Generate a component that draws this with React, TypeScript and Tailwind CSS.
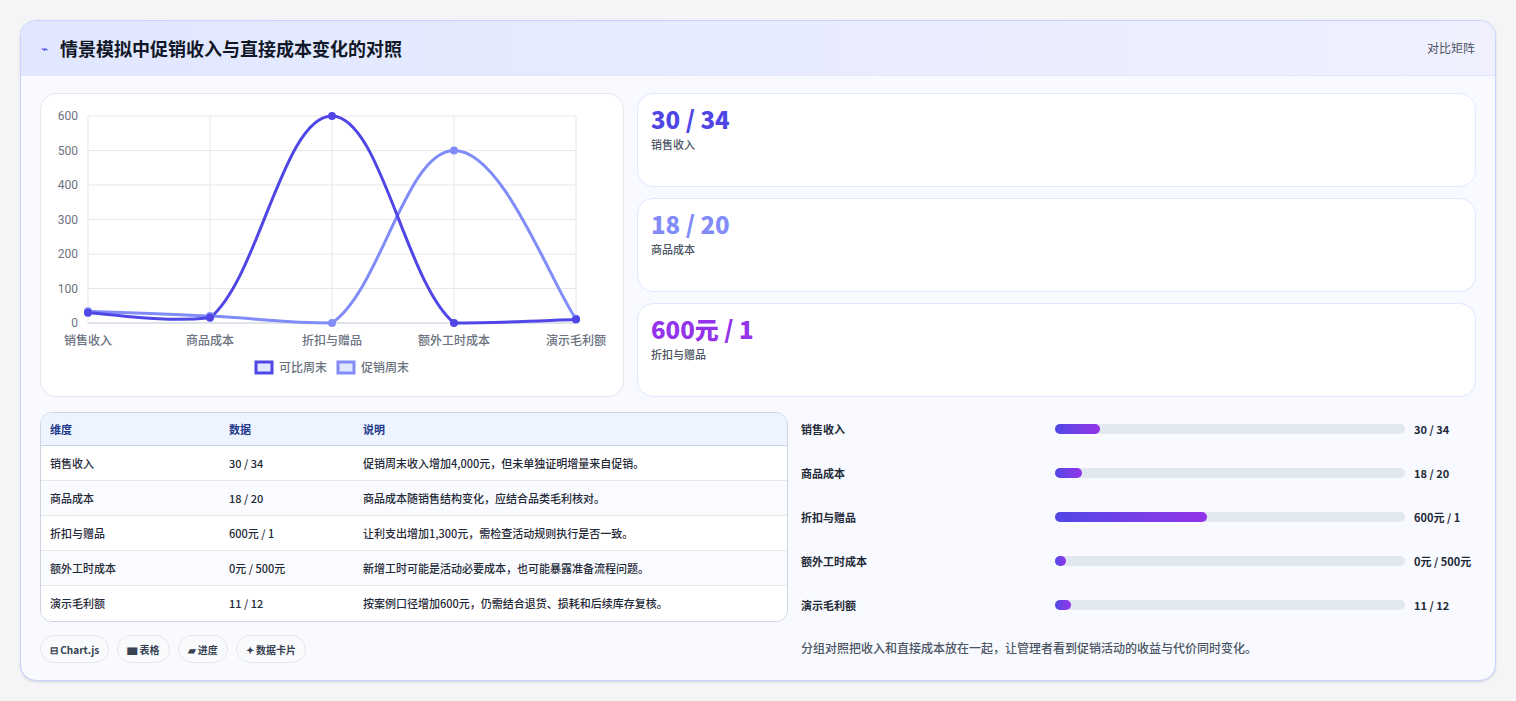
import React from "react";

const labels = ["销售收入", "商品成本", "折扣与赠品", "额外工时成本", "演示毛利额"];
const s1 = [30, 15, 600, 0, 10];
const s2 = [34, 20, 0, 500, 12];
const X0 = 47, X1 = 535, Y0 = 229, Y1 = 22;
const px = (i: number) => X0 + ((X1 - X0) / 4) * i;
const py = (v: number) => Y0 - ((Y0 - Y1) * v) / 600;
const cl = (y: number) => Math.min(Y0, Math.max(Y1, y));

function path(data: number[]) {
  const pts = data.map((v, i) => [px(i), py(v)]);
  const t = 0.4;
  let d = `M${pts[0][0]},${pts[0][1]}`;
  for (let i = 0; i < pts.length - 1; i++) {
    const p0 = pts[Math.max(0, i - 1)], p1 = pts[i], p2 = pts[i + 1], p3 = pts[Math.min(pts.length - 1, i + 2)];
    const c1 = [p1[0] + ((p2[0] - p0[0]) * t) / 2, cl(p1[1] + ((p2[1] - p0[1]) * t) / 2)];
    const c2 = [p2[0] - ((p3[0] - p1[0]) * t) / 2, cl(p2[1] - ((p3[1] - p1[1]) * t) / 2)];
    d += ` C${c1[0]},${c1[1]} ${c2[0]},${c2[1]} ${p2[0]},${p2[1]}`;
  }
  return d;
}

function Chart() {
  return (
    <svg width="583" height="303" viewBox="0 0 583 303" className="block">
      {[0, 100, 200, 300, 400, 500, 600].map((v) => (
        <g key={v}>
          <line x1={X0} x2={X1} y1={py(v)} y2={py(v)} stroke="#e5e7eb" />
          <text x={X0 - 10} y={py(v) + 4} textAnchor="end" fontSize="12" fill="#6b7280" fontFamily="Roboto, sans-serif">{v}</text>
        </g>
      ))}
      {labels.map((l, i) => (
        <g key={l}>
          <line x1={px(i)} x2={px(i)} y1={Y1} y2={Y0} stroke="#e5e7eb" />
          <text x={px(i)} y={251} textAnchor="middle" fontSize="12" fontWeight="500" fill="#6b7280" fontFamily="'Noto Sans CJK SC', sans-serif">{l}</text>
        </g>
      ))}
      <line x1={X0} x2={X1} y1={Y0} y2={Y0} stroke="#cbd5e1" />
      <path d={path(s2)} fill="none" stroke="#818cf8" strokeWidth="3" />
      <path d={path(s1)} fill="none" stroke="#4f46e5" strokeWidth="3" />
      {s2.map((v, i) => <circle key={"b" + i} cx={px(i)} cy={py(v)} r="4" fill="#818cf8" />)}
      {s1.map((v, i) => <circle key={"a" + i} cx={px(i)} cy={py(v)} r="4" fill="#4f46e5" />)}
      <rect x="215" y="268" width="16" height="11" fill="#e0e7ff" stroke="#4f46e5" strokeWidth="3" />
      <text x="238" y="278" fontSize="12" fontWeight="500" fill="#6b7280" fontFamily="'Noto Sans CJK SC', sans-serif">可比周末</text>
      <rect x="297" y="268" width="16" height="11" fill="#e0e7ff" stroke="#818cf8" strokeWidth="3" />
      <text x="320" y="278" fontSize="12" fontWeight="500" fill="#6b7280" fontFamily="'Noto Sans CJK SC', sans-serif">促销周末</text>
    </svg>
  );
}

const stats = [
  { v: "30 / 34", l: "销售收入", c: "text-[#4f46e5]" },
  { v: "18 / 20", l: "商品成本", c: "text-[#818cf8]" },
  { v: "600元 / 1", l: "折扣与赠品", c: "text-[#9333ea]" },
];

const rows = [
  ["销售收入", "30 / 34", "促销周末收入增加4,000元，但未单独证明增量来自促销。"],
  ["商品成本", "18 / 20", "商品成本随销售结构变化，应结合品类毛利核对。"],
  ["折扣与赠品", "600元 / 1", "让利支出增加1,300元，需检查活动规则执行是否一致。"],
  ["额外工时成本", "0元 / 500元", "新增工时可能是活动必要成本，也可能暴露准备流程问题。"],
  ["演示毛利额", "11 / 12", "按案例口径增加600元，仍需结合退货、损耗和后续库存复核。"],
];

const bars = [
  ["销售收入", 45, "30 / 34"],
  ["商品成本", 27, "18 / 20"],
  ["折扣与赠品", 152, "600元 / 1"],
  ["额外工时成本", 11, "0元 / 500元"],
  ["演示毛利额", 16, "11 / 12"],
] as const;

export default function App() {
  return (
    <div className="w-[1516px] h-[701px] bg-[#f5f5f7] pt-5 pl-5" style={{ fontFamily: "'Noto Sans CJK SC', 'Noto Sans', sans-serif" }}>
      <div className="w-[1476px] h-[661px] rounded-2xl border border-[#c7d2fe] bg-[#f8faff] overflow-hidden shadow-sm">
        <div className="h-[55px] flex items-center justify-between px-5 bg-gradient-to-r from-[#e0e7ff] to-[#f0f0ff] border-b border-[#e0e7ff]">
          <div className="flex items-center gap-3">
            <span className="text-[#4f46e5] text-xs">⌁</span>
            <span className="text-[18px] font-bold text-[#111827]">情景模拟中促销收入与直接成本变化的对照</span>
          </div>
          <span className="text-[12px] text-[#4b5563]">对比矩阵</span>
        </div>
        <div className="px-[19px] pt-[17px]">
          <div className="flex gap-[13px]">
            <div className="w-[584px] h-[304px] bg-white rounded-2xl border border-[#e5e7eb]"><Chart /></div>
            <div className="flex-1 flex flex-col gap-[11px]">
              {stats.map((s) => (
                <div key={s.l} className="h-[94px] bg-white rounded-2xl border border-[#e0e7ff] px-[13px] pt-[9px]">
                  <div className={`text-[24px] font-black leading-[32px] ${s.c}`}>{s.v}</div>
                  <div className="text-[11px] font-medium text-[#4b5563] mt-[1px]">{s.l}</div>
                </div>
              ))}
            </div>
          </div>
          <div className="flex gap-[13px] mt-[15px]">
            <div className="w-[748px] shrink-0">
              <div className="rounded-xl border border-[#cbd5e1] overflow-hidden bg-white text-[11px]">
                <div className="flex h-[33px] items-center bg-[#eef4ff] border-b border-[#cbd5e1] text-[#1e3a8a] font-semibold">
                  <div className="w-[188px] pl-[9px]">维度</div><div className="w-[134px]">数据</div><div>说明</div>
                </div>
                {rows.map((r, i) => (
                  <div key={r[0]} className={`flex h-[35px] items-center font-medium text-[#1f2937] ${i < 4 ? "border-b border-[#e5e7eb]" : ""} ${i % 2 ? "bg-[#fafbff]" : "bg-white"}`}>
                    <div className="w-[188px] pl-[9px]">{r[0]}</div><div className="w-[134px]">{r[1]}</div><div>{r[2]}</div>
                  </div>
                ))}
              </div>
              <div className="flex gap-2 mt-[13px]">
                {["⊟ Chart.js", "▆ 表格", "▰ 进度", "✦ 数据卡片"].map((c) => (
                  <span key={c} className="h-[28px] px-[9px] flex items-center rounded-full border border-[#e5e7eb] bg-[#f8fafc] text-[10px] font-semibold text-[#374151]">{c}</span>
                ))}
              </div>
            </div>
            <div className="flex-1 -mt-[5px]">
              {bars.map(([l, w, v]) => (
                <div key={l} className="h-[44px] flex items-center text-[11px] text-[#1f2937] font-semibold">
                  <div className="w-[254px] shrink-0">{l}</div>
                  <div className="w-[350px] shrink-0 h-[10px] rounded-full bg-[#e2e8f0]">
                    <div className="h-full rounded-full bg-gradient-to-r from-[#4f46e5] to-[#9333ea]" style={{ width: w }} />
                  </div>
                  <div className="ml-[9px] font-bold whitespace-nowrap">{v}</div>
                </div>
              ))}
              <div className="mt-[12px] text-[12px] font-medium text-[#4b5563]">分组对照把收入和直接成本放在一起，让管理者看到促销活动的收益与代价同时变化。</div>
            </div>
          </div>
        </div>
      </div>
    </div>
  );
}
